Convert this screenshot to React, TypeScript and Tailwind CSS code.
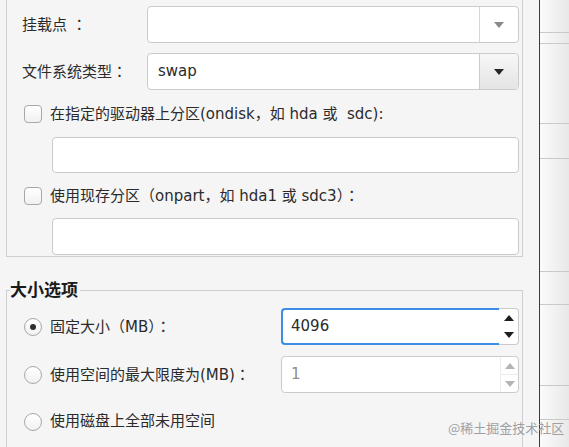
import React from "react";

const FONT = { fontFamily: '"DejaVu Sans", "Noto Sans CJK SC", sans-serif' };
const JP = { fontFamily: '"Noto Sans CJK JP", sans-serif' };

function C() {
  return <span style={JP}>：</span>;
}

function Arrow({ dir, color }: { dir: "up" | "down"; color: string }) {
  return (
    <svg width="10" height="6" viewBox="0 0 10 6">
      {dir === "down" ? <path d="M0 0 L10 0 L5 6 Z" fill={color} /> : <path d="M0 6 L10 6 L5 0 Z" fill={color} />}
    </svg>
  );
}

function Checkbox() {
  return <div className="w-[18px] h-[18px] rounded-[4px] border border-[#a8a8a8] bg-gradient-to-b from-white to-[#f1f1f1] shrink-0" />;
}

function Radio({ checked }: { checked?: boolean }) {
  return (
    <div className="w-[18px] h-[18px] rounded-full border border-[#a8a8a8] bg-gradient-to-b from-white to-[#f1f1f1] shrink-0 flex items-center justify-center">
      {checked && <div className="w-[6px] h-[6px] rounded-full bg-[#2e2e2e]" />}
    </div>
  );
}

export default function App() {
  return (
    <div className="w-[569px] h-[447px] flex overflow-hidden text-[15px] text-[#2b2b2b] relative" style={FONT}>
      {/* Left dialog area */}
      <div className="w-[539px] h-full bg-[#f5f5f6] flex flex-col">
        {/* Group box 1 */}
        <div className="ml-[6px] w-[517px] border-l border-r border-b border-[#cfcfd1] pt-[6px] pb-[1px] flex flex-col">
          <div className="h-[37px] flex items-center pr-[3px]">
            <div className="w-[140px] pl-[15px] whitespace-nowrap">挂载点 <C /></div>
            <div className="flex-1 h-full flex rounded-[4px] border border-[#cbcbcb] bg-white">
              <div className="flex-1" />
              <div className="w-[39px] border-l border-[#d6d6d6] flex items-center justify-center">
                <Arrow dir="down" color="#8a8a8a" />
              </div>
            </div>
          </div>
          <div className="h-[37px] mt-[10px] flex items-center pr-[3px]">
            <div className="w-[140px] pl-[15px] whitespace-nowrap">文件系统类型<C /></div>
            <div className="flex-1 h-full flex rounded-[4px] border border-[#cbcbcb] bg-white">
              <div className="flex-1 flex items-center pl-[10px]">swap</div>
              <div className="w-[39px] border-l border-[#cbcbcb] rounded-r-[4px] bg-gradient-to-b from-[#f7f7f7] to-[#e4e4e4] flex items-center justify-center">
                <Arrow dir="down" color="#262626" />
              </div>
            </div>
          </div>
          <div className="h-[24px] mt-[12px] flex items-center pl-[17px] gap-[8px]">
            <Checkbox />
            <span className="whitespace-nowrap">在指定的驱动器上分区(ondisk，如 hda 或&nbsp; sdc):</span>
          </div>
          <div className="h-[36px] mt-[11px] ml-[45px] mr-[3px] rounded-[4px] border border-[#cbcbcb] bg-white" />
          <div className="h-[24px] mt-[11px] flex items-center pl-[17px] gap-[8px]">
            <Checkbox />
            <span className="whitespace-nowrap">使用现存分区（onpart，如 hda1 或 sdc3）<C /></span>
          </div>
          <div className="h-[37px] mt-[10px] ml-[45px] mr-[3px] rounded-[4px] border border-[#cbcbcb] bg-white" />
        </div>

        {/* Group box 2 */}
        <fieldset className="ml-[6px] w-[517px] mt-[25px] border border-b-0 border-[#cfcfd1] flex-1 min-h-0">
          <legend className="ml-[3px] pr-[2px] text-[17px] leading-[17px] font-bold text-[#1a1a1a]">大小选项</legend>
          <div className="flex flex-col">
            <div className="h-[37px] mt-[9px] flex items-center pl-[17px] pr-[3px]">
              <div className="w-[257px] flex items-center gap-[8px] whitespace-nowrap">
                <Radio checked />
                <span>固定大小（MB）<C /></span>
              </div>
              <div className="flex-1 h-full flex">
                <div className="flex-1 border-2 border-r-0 border-[#3d8ee6] rounded-l-[4px] bg-white flex items-center pl-[8px]">4096</div>
                <div className="w-[20px] border border-l-0 border-[#cbcbcb] rounded-r-[4px] bg-white flex flex-col items-center justify-between py-[6px]">
                  <Arrow dir="up" color="#1e1e1e" />
                  <Arrow dir="down" color="#1e1e1e" />
                </div>
              </div>
            </div>
            <div className="h-[37px] mt-[11px] flex items-center pl-[17px] pr-[3px]">
              <div className="w-[257px] flex items-center gap-[8px] whitespace-nowrap">
                <Radio />
                <span>使用空间的最大限度为(MB)<C /></span>
              </div>
              <div className="flex-1 h-full flex rounded-[4px] border border-[#cbcbcb] bg-white">
                <div className="flex-1 flex items-center pl-[9px] text-[#8e8e8e]">1</div>
                <div className="w-[18px] border-l border-[#ececec] flex flex-col">
                  <div className="flex-1 border-b border-[#ececec] flex items-center justify-center">
                    <Arrow dir="up" color="#b4b4b4" />
                  </div>
                  <div className="flex-1 flex items-center justify-center">
                    <Arrow dir="down" color="#b4b4b4" />
                  </div>
                </div>
              </div>
            </div>
            <div className="h-[37px] mt-[10px] flex items-center pl-[17px] gap-[8px]">
              <Radio />
              <span>使用磁盘上全部未用空间</span>
            </div>
          </div>
        </fieldset>
      </div>

      {/* Divider */}
      <div className="w-[1px] h-full bg-[#3a3a3a]" />

      {/* Right panel */}
      <div className="flex-1 h-full flex flex-col bg-gradient-to-r from-[#fbfbfb] to-[#e8e8e8]">
        <div className="h-[33px] border-b border-[#c9c9c9]" />
        <div className="h-[11px] border-b border-[#c9c9c9]" />
        <div className="h-[80px] border-b border-[#c9c9c9]" />
        <div className="h-[35px] border-b border-[#c9c9c9]" />
        <div className="h-[113px] border-b border-[#c9c9c9]" />
        <div className="h-[33px] border-b border-[#c9c9c9]" />
        <div className="h-[81px] border-b border-[#c9c9c9]" />
        <div className="h-[34px] border-b border-[#c9c9c9]" />
      </div>

      {/* Watermark */}
      <div
        className="absolute left-[448px] top-[419px] text-[13px] leading-[17px] text-[#a0a0a4] whitespace-nowrap"
        style={{ fontFamily: '"Noto Sans CJK SC", sans-serif' }}
      >
        @稀土掘金技术社区
      </div>
    </div>
  );
}
